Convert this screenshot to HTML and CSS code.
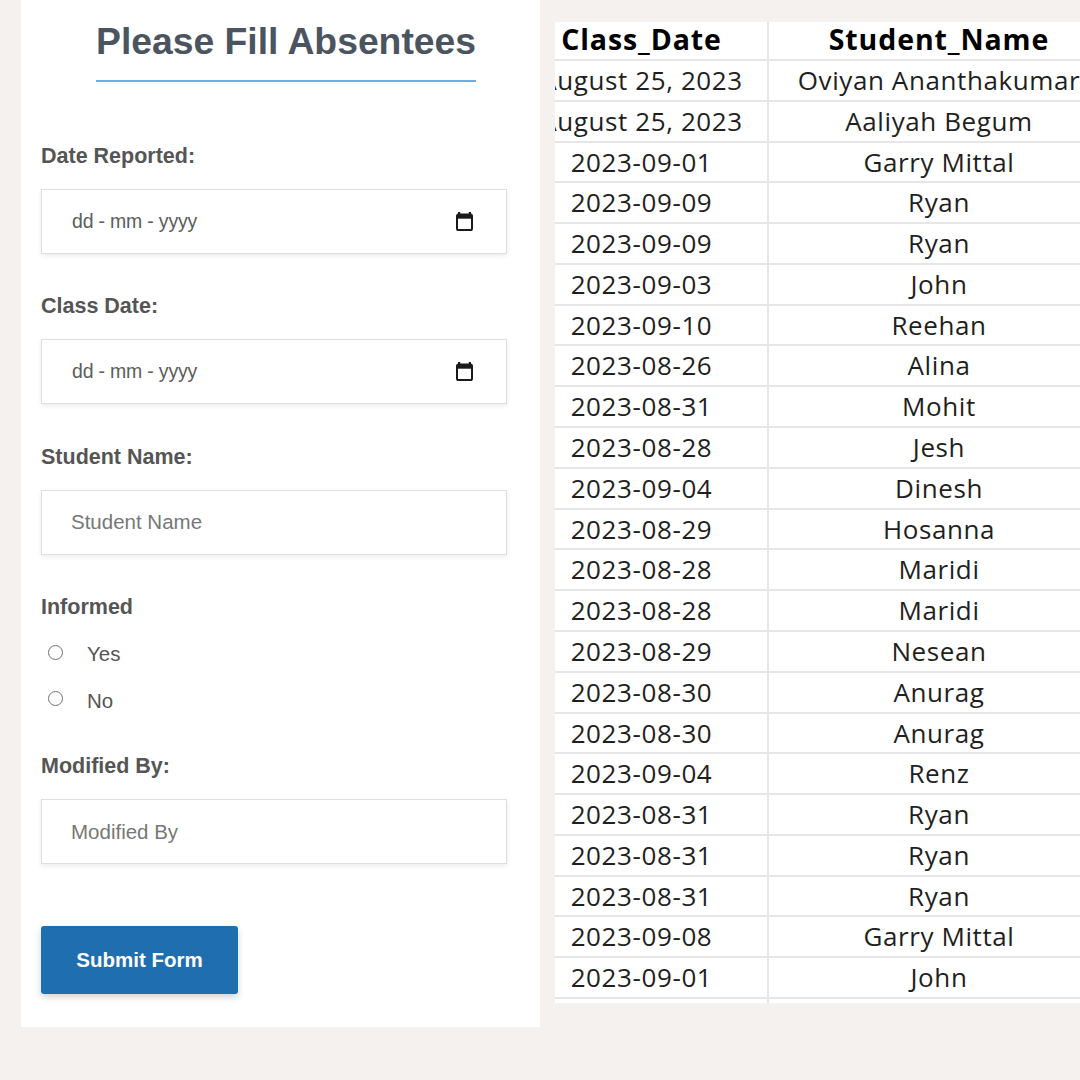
FILE: index.html
```html
<!DOCTYPE html>
<html lang="en">
<head>
<meta charset="utf-8">
<title>Please Fill Absentees</title>
<link rel="stylesheet" href="styles.css">
</head>
<body>
<div class="page">
  <form class="panel">
    <h1 class="title">Please Fill Absentees</h1>

    <div class="field first">
      <label class="label">Date Reported:</label>
      <div class="control date">
        <span class="date-text">dd - mm - yyyy</span>
        <svg class="cal" width="17" height="19" viewBox="0 0 17 19" aria-hidden="true">
          <rect x="2" y="0" width="2.2" height="3.5" fill="#1a1a1a"/>
          <rect x="12.8" y="0" width="2.2" height="3.5" fill="#1a1a1a"/>
          <rect x="1" y="2.5" width="15" height="15.5" rx="1.6" fill="none" stroke="#1a1a1a" stroke-width="2"/>
          <rect x="1" y="2.5" width="15" height="4.2" fill="#1a1a1a"/>
        </svg>
      </div>
    </div>

    <div class="field">
      <label class="label">Class Date:</label>
      <div class="control date">
        <span class="date-text">dd - mm - yyyy</span>
        <svg class="cal" width="17" height="19" viewBox="0 0 17 19" aria-hidden="true">
          <rect x="2" y="0" width="2.2" height="3.5" fill="#1a1a1a"/>
          <rect x="12.8" y="0" width="2.2" height="3.5" fill="#1a1a1a"/>
          <rect x="1" y="2.5" width="15" height="15.5" rx="1.6" fill="none" stroke="#1a1a1a" stroke-width="2"/>
          <rect x="1" y="2.5" width="15" height="4.2" fill="#1a1a1a"/>
        </svg>
      </div>
    </div>

    <div class="field">
      <label class="label">Student Name:</label>
      <input class="control text" type="text" placeholder="Student Name">
    </div>

    <div class="field">
      <div class="label">Informed</div>
      <div class="radios">
        <label class="radio-row"><input type="radio" name="informed"><span>Yes</span></label>
        <label class="radio-row"><input type="radio" name="informed"><span>No</span></label>
      </div>
    </div>

    <div class="field modified">
      <label class="label">Modified By:</label>
      <input class="control text" type="text" placeholder="Modified By">
    </div>

    <button class="submit" type="button">Submit Form</button>
  </form>

  <div class="table-wrap">
    <table class="sheet">
      <colgroup><col class="c1"><col class="c2"></colgroup>
      <thead>
        <tr><th>Class_Date</th><th>Student_Name</th></tr>
      </thead>
      <tbody>
        <tr><td>August 25, 2023</td><td>Oviyan Ananthakumar</td></tr>
        <tr><td>August 25, 2023</td><td>Aaliyah Begum</td></tr>
        <tr><td>2023-09-01</td><td>Garry Mittal</td></tr>
        <tr><td>2023-09-09</td><td>Ryan</td></tr>
        <tr><td>2023-09-09</td><td>Ryan</td></tr>
        <tr><td>2023-09-03</td><td>John</td></tr>
        <tr><td>2023-09-10</td><td>Reehan</td></tr>
        <tr><td>2023-08-26</td><td>Alina</td></tr>
        <tr><td>2023-08-31</td><td>Mohit</td></tr>
        <tr><td>2023-08-28</td><td>Jesh</td></tr>
        <tr><td>2023-09-04</td><td>Dinesh</td></tr>
        <tr><td>2023-08-29</td><td>Hosanna</td></tr>
        <tr><td>2023-08-28</td><td>Maridi</td></tr>
        <tr><td>2023-08-28</td><td>Maridi</td></tr>
        <tr><td>2023-08-29</td><td>Nesean</td></tr>
        <tr><td>2023-08-30</td><td>Anurag</td></tr>
        <tr><td>2023-08-30</td><td>Anurag</td></tr>
        <tr><td>2023-09-04</td><td>Renz</td></tr>
        <tr><td>2023-08-31</td><td>Ryan</td></tr>
        <tr><td>2023-08-31</td><td>Ryan</td></tr>
        <tr><td>2023-08-31</td><td>Ryan</td></tr>
        <tr><td>2023-09-08</td><td>Garry Mittal</td></tr>
        <tr><td>2023-09-01</td><td>John</td></tr>
        <tr><td>&nbsp;</td><td>&nbsp;</td></tr>
      </tbody>
    </table>
  </div>
</div>
</body>
</html>
```

FILE: styles.css
```css
html, body {
  margin: 0;
  padding: 0;
  height: 100%;
  overflow: hidden;
  background: #f4f1ee;
}

.page {
  display: flex;
  align-items: flex-start;
}

/* ---------- form panel ---------- */
.panel {
  box-sizing: border-box;
  width: 519px;
  height: 1027px;
  margin: 0 0 0 21px;
  padding: 20px 33px 0 20px;
  background: #fff;
  font-family: "Liberation Sans", Arial, sans-serif;
  display: flex;
  flex-direction: column;
  align-items: flex-start;
}

.title {
  width: fit-content;
  margin: 0 0 0 55px;
  padding-bottom: 18px;
  font-size: 37.3px;
  line-height: 42px;
  font-weight: 700;
  color: #4b555f;
  border-bottom: 2px solid #6aaee6;
}

.field {
  display: flex;
  flex-direction: column;
  margin-top: 40.5px;
}

.field.first {
  margin-top: 62px;
}

.field.modified {
  margin-top: 32.4px;
}

.label {
  display: block;
  font-size: 21.5px;
  line-height: 25.8px;
  font-weight: 700;
  color: #555;
  margin-bottom: 19.2px;
}

.control {
  box-sizing: border-box;
  width: 466px;
  height: 65px;
  margin: 0;
  border: 1px solid #dedede;
  background: #fff;
  box-shadow: 0 2px 5px rgba(0, 0, 0, 0.08);
  font-family: "Liberation Sans", Arial, sans-serif;
}

.control.date {
  display: flex;
  align-items: center;
  justify-content: space-between;
  padding: 0 33px 0 30px;
}

.date-text {
  font-size: 19.5px;
  color: #5d5d5d;
  letter-spacing: -0.2px;
}

.cal {
  display: block;
}

.control.text {
  padding: 0 0 0 29px;
  font-size: 20.5px;
  color: #333;
  outline: none;
}

.control.text::placeholder {
  color: #777;
  opacity: 1;
}

.radios {
  display: flex;
  flex-direction: column;
  margin-top: -11.6px;
}

.radio-row {
  display: flex;
  align-items: center;
  height: 46.6px;
  font-size: 20.5px;
  color: #555;
}

.radio-row input {
  appearance: none;
  -webkit-appearance: none;
  box-sizing: border-box;
  width: 15px;
  height: 15px;
  margin: 0 0 0 7px;
  border: 1.6px solid #6f6f6f;
  border-radius: 50%;
  background: #fff;
}

.radio-row input:checked {
  background: radial-gradient(circle, #1f6fb0 0 3.5px, #fff 4px);
}

.radio-row span {
  margin-left: 24px;
  padding-top: 4px;
}

.submit {
  box-sizing: border-box;
  width: 197px;
  height: 68px;
  margin-top: 62px;
  padding: 0;
  border: none;
  border-radius: 3px;
  background: #1f6fb0;
  color: #fff;
  font-family: "Liberation Sans", Arial, sans-serif;
  font-size: 20.5px;
  font-weight: 700;
  box-shadow: 0 3px 7px rgba(0, 0, 0, 0.18);
}

/* ---------- sheet ---------- */
.table-wrap {
  flex: 1;
  height: 981px;
  margin: 22px 0 0 15px;
  overflow: hidden;
  background: #fff;
}

.sheet {
  table-layout: fixed;
  width: 593px;
  margin-left: -39px;
  border-collapse: separate;
  border-spacing: 0;
  font-family: "Open Sans", "DejaVu Sans", sans-serif;
  font-size: 26px;
  letter-spacing: 0.6px;
  color: #1f1f1f;
}

.sheet col.c1 { width: 253px; }
.sheet col.c2 { width: 340px; }

.sheet th,
.sheet td {
  padding: 0;
  text-align: center;
  white-space: nowrap;
  border-bottom: 2px solid #e6e6e6;
}

.sheet td {
  overflow: hidden;
  line-height: 38.78px;
}

.sheet th:first-child,
.sheet td:first-child {
  border-right: 2px solid #e6e6e6;
}

.sheet th {
  line-height: 35px;
  padding-bottom: 2px;
  font-size: 28.5px;
  font-weight: 700;
  letter-spacing: 0.9px;
  color: #000;
}
```
